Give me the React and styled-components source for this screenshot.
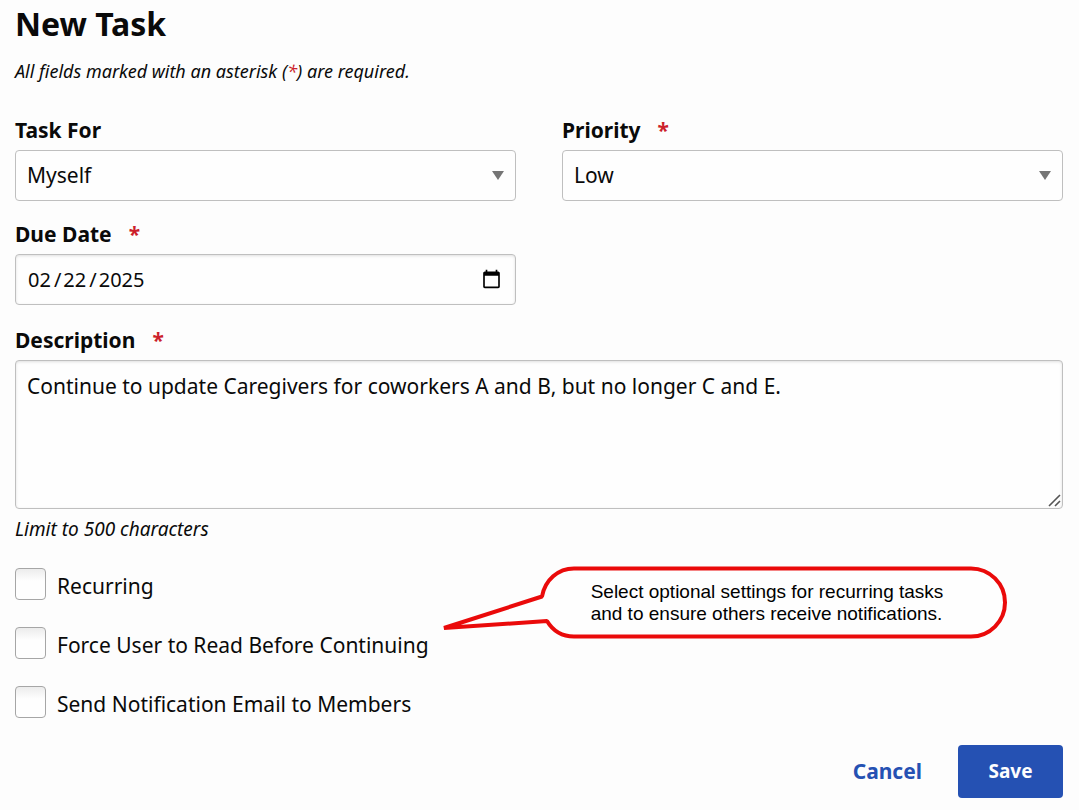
import React, { useState } from "react";
import styled, { createGlobalStyle } from "styled-components";

const GlobalStyle = createGlobalStyle`
  *, *::before, *::after {
    box-sizing: border-box;
  }

  body {
    margin: 0;
    background: #fdfdfd;
    color: #0a0a0a;
    font-family: "Noto Sans", sans-serif;
    font-size: 21px;
    line-height: 28px;
  }
`;

const Form = styled.form`
  padding: 0 16px 12px 15px;
`;

const Title = styled.h1`
  margin: 0;
  padding-top: 2px;
  font-size: 32px;
  line-height: 44px;
  font-weight: 700;
`;

const Intro = styled.p`
  margin: 13px 0 33px;
  font-size: 18px;
  line-height: 24px;
  font-style: italic;
`;

const Star = styled.span`
  color: #cc1f2b;
`;

const Fields = styled.div`
  display: grid;
  grid-template-columns: 1fr 1fr;
  column-gap: 46px;
  row-gap: 19px;
`;

const Field = styled.div`
  display: flex;
  flex-direction: column;
  gap: 6px;
`;

const Label = styled.label`
  font-weight: 700;

  ${Star} {
    margin-left: 17px;
  }
`;

const SelectWrap = styled.div`
  position: relative;
`;

const Select = styled.select`
  appearance: none;
  display: block;
  width: 100%;
  height: 51px;
  padding: 0 40px 2px 11px;
  border: 1px solid #bfbfbf;
  border-radius: 4px;
  background: #fefefe;
  color: inherit;
  font: inherit;
`;

const Arrow = styled.svg`
  position: absolute;
  top: 21px;
  right: 12px;
  pointer-events: none;
`;

const DateInput = styled.input`
  width: 100%;
  height: 51px;
  padding: 0 11px;
  border: 1px solid #bfbfbf;
  border-radius: 4px;
  background: #fefefe;
  box-shadow: inset 0 1px 3px rgba(10, 10, 10, 0.12);
  color: inherit;
  font: inherit;
  font-size: 20px;

  &::-webkit-datetime-edit-text {
    padding: 0 1px 0 2px;
  }

  &::-webkit-calendar-picker-indicator {
    width: 21px;
    height: 21px;
  }
`;

const Description = styled(Field)`
  margin: 21px 0 8px;
`;

const TextArea = styled.textarea`
  display: block;
  width: 100%;
  height: 149px;
  padding: 11px;
  border: 1px solid #bfbfbf;
  border-radius: 4px;
  background: #fefefe;
  box-shadow: inset 0 1px 3px rgba(10, 10, 10, 0.12);
  color: inherit;
  font: inherit;
  resize: vertical;

  &::-webkit-resizer {
    background: url("data:image/svg+xml,%3Csvg xmlns='http://www.w3.org/2000/svg' width='15' height='15'%3E%3Cpath d='M2 13L13 2M8 13L13 8' stroke='%23555' stroke-width='1.6'/%3E%3C/svg%3E")
      no-repeat;
  }
`;

const Note = styled.p`
  margin: 0 0 26px;
  font-size: 19px;
  line-height: 25px;
  font-style: italic;
`;

const Options = styled.div`
  display: flex;
  align-items: flex-start;
  gap: 14px;
`;

const OptionList = styled.div`
  display: flex;
  flex-direction: column;
  gap: 27px;
`;

const Option = styled.label`
  display: flex;
  gap: 11px;
  line-height: 32px;
  white-space: nowrap;

  span {
    padding-top: 2px;
    margin-bottom: -2px;
  }
`;

const Checkbox = styled.input`
  appearance: none;
  flex: none;
  width: 31px;
  height: 32px;
  margin: 0;
  border: 1px solid #a6a6a6;
  border-radius: 4px;
  background: linear-gradient(#ececec, #fefefe 40%);

  &:checked {
    background: #2551b3;
  }
`;

const Callout = styled.aside`
  position: relative;
  width: 564px;
  padding: 15px 60px 13px 148px;
  margin-top: -2px;
  color: #000;
  font-family: "Liberation Sans", Arial, sans-serif;
  font-size: 19px;
  line-height: 22px;
  white-space: nowrap;
`;

const Bubble = styled.svg`
  position: absolute;
  inset: 0;
  overflow: visible;
`;

const CalloutText = styled.span`
  position: relative;
`;

const Actions = styled.div`
  display: flex;
  justify-content: flex-end;
  gap: 36px;
  margin-top: 27px;
`;

const Button = styled.button`
  height: 53px;
  padding: 0 0 2px;
  border: 0;
  border-radius: 4px;
  background: none;
  color: #2551b3;
  font: inherit;
  font-weight: 700;
  cursor: pointer;
`;

const PrimaryButton = styled(Button)`
  min-width: 105px;
  padding: 0 30px 2px;
  background: #2551b3;
  color: #fefefe;
  font-size: 19px;
`;

const SETTINGS = [
  { id: "recurring", label: "Recurring" },
  { id: "forceRead", label: "Force User to Read Before Continuing" },
  { id: "sendEmail", label: "Send Notification Email to Members" },
];

const Dropdown = ({ id, options, value, onChange }) => (
  <SelectWrap>
    <Select id={id} value={value} onChange={onChange}>
      {options.map((option) => (
        <option key={option}>{option}</option>
      ))}
    </Select>
    <Arrow width="12" height="9" viewBox="0 0 12 9" aria-hidden="true">
      <path d="M0 0h12L6 9z" fill="#757575" />
    </Arrow>
  </SelectWrap>
);

const App = () => {
  const [task, setTask] = useState({
    taskFor: "Myself",
    priority: "Low",
    dueDate: "2025-02-22",
    description:
      "Continue to update Caregivers for coworkers A and B, but no longer C and E.",
    recurring: false,
    forceRead: false,
    sendEmail: false,
  });

  const update = (key) => (e) => {
    const value = e.target.type === "checkbox" ? e.target.checked : e.target.value;
    setTask((prev) => ({ ...prev, [key]: value }));
  };

  return (
    <>
      <GlobalStyle />
      <Form onSubmit={(e) => e.preventDefault()}>
        <Title>New Task</Title>
        <Intro>
          All fields marked with an asterisk (<Star>*</Star>) are required.
        </Intro>

        <Fields>
          <Field>
            <Label htmlFor="taskFor">Task For</Label>
            <Dropdown
              id="taskFor"
              options={["Myself"]}
              value={task.taskFor}
              onChange={update("taskFor")}
            />
          </Field>
          <Field>
            <Label htmlFor="priority">
              Priority<Star>*</Star>
            </Label>
            <Dropdown
              id="priority"
              options={["Low"]}
              value={task.priority}
              onChange={update("priority")}
            />
          </Field>
          <Field>
            <Label htmlFor="dueDate">
              Due Date<Star>*</Star>
            </Label>
            <DateInput
              id="dueDate"
              type="date"
              value={task.dueDate}
              onChange={update("dueDate")}
            />
          </Field>
        </Fields>

        <Description>
          <Label htmlFor="description">
            Description<Star>*</Star>
          </Label>
          <TextArea
            id="description"
            maxLength={500}
            spellCheck={false}
            value={task.description}
            onChange={update("description")}
          />
        </Description>
        <Note>Limit to 500 characters</Note>

        <Options>
          <OptionList>
            {SETTINGS.map(({ id, label }) => (
              <Option key={id} htmlFor={id}>
                <Checkbox
                  id={id}
                  type="checkbox"
                  checked={task[id]}
                  onChange={update(id)}
                />
                <span>{label}</span>
              </Option>
            ))}
          </OptionList>
          <Callout>
            <Bubble width="564" height="72" viewBox="0 0 564 72" aria-hidden="true">
              <path
                d="M99 30.5C102 14 115 2.5 131 2.5H528A34 34 0 0 1 528 70.5H131C119 70.5 110 65 104 55L1 62Z"
                fill="#fefefe"
                stroke="#ea0a0a"
                strokeWidth="4"
                strokeLinejoin="bevel"
              />
            </Bubble>
            <CalloutText>
              Select optional settings for recurring tasks
              <br />
              and to ensure others receive notifications.
            </CalloutText>
          </Callout>
        </Options>

        <Actions>
          <Button type="button">Cancel</Button>
          <PrimaryButton type="submit">Save</PrimaryButton>
        </Actions>
      </Form>
    </>
  );
};

export default App;
